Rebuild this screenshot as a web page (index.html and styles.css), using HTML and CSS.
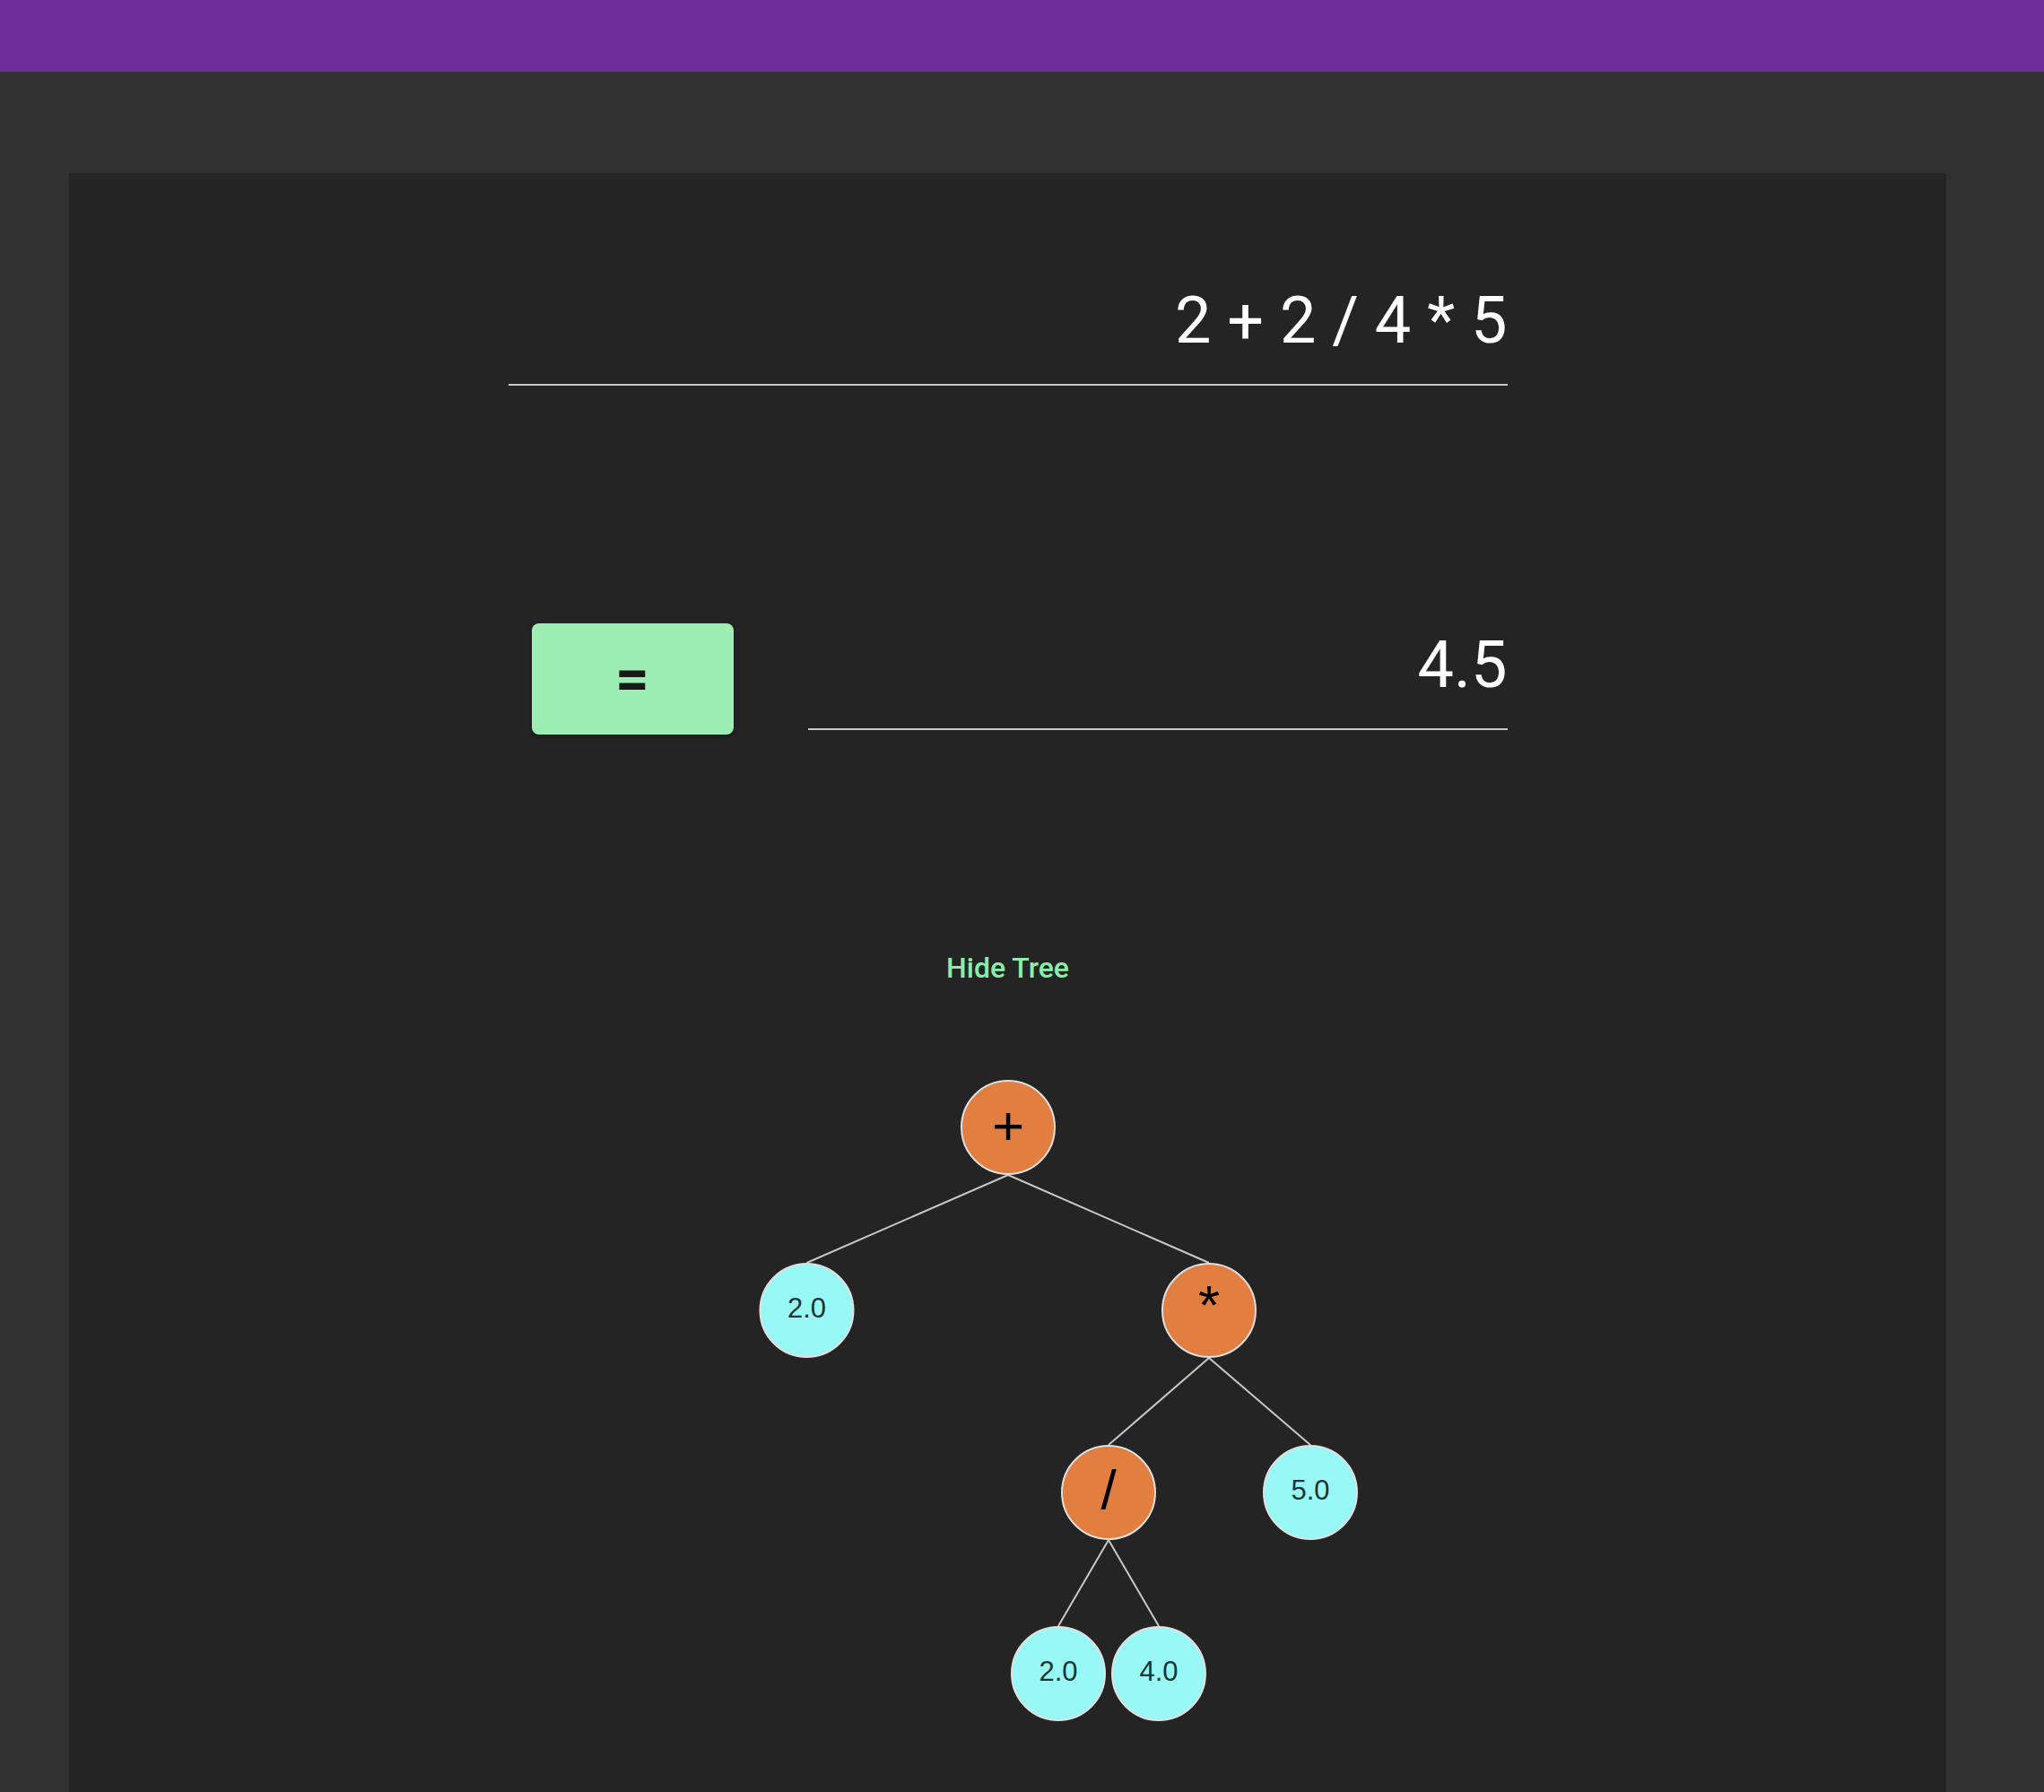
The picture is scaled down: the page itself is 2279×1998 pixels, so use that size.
FILE: index.html
```html
<!DOCTYPE html>
<html lang="en">
<head>
<meta charset="utf-8">
<title>Expression Tree Calculator</title>
<link rel="stylesheet" href="styles.css">
</head>
<body>
<header class="topbar"></header>
<main class="page">
  <section class="panel">
    <div class="field expr">2 + 2 / 4 * 5</div>
    <div class="eval-row">
      <button class="eq-btn">=</button>
      <div class="field result">4.5</div>
    </div>
    <button class="toggle">Hide Tree</button>
    <svg class="tree" width="800" height="730" viewBox="0 0 800 730" xmlns="http://www.w3.org/2000/svg">
      <g class="edges">
        <line x1="400" y1="120" x2="175.5" y2="218"/>
        <line x1="400" y1="120" x2="624" y2="218"/>
        <line x1="624" y1="324" x2="512" y2="421"/>
        <line x1="624" y1="324" x2="737" y2="421"/>
        <line x1="512" y1="527" x2="456" y2="623"/>
        <line x1="512" y1="527" x2="568" y2="623"/>
      </g>
      <g class="node op"><circle cx="400" cy="67" r="52"/><text x="400" y="64">+</text></g>
      <g class="node num"><circle cx="175.5" cy="271" r="52"/><text x="175.5" y="268">2.0</text></g>
      <g class="node op"><circle cx="624" cy="271" r="52"/><text x="624" y="264">*</text></g>
      <g class="node op"><circle cx="512" cy="474" r="52"/><text x="512" y="470">/</text></g>
      <g class="node num"><circle cx="737" cy="474" r="52"/><text x="737" y="471">5.0</text></g>
      <g class="node num"><circle cx="456" cy="676" r="52"/><text x="456" y="673">2.0</text></g>
      <g class="node num"><circle cx="568" cy="676" r="52"/><text x="568" y="673">4.0</text></g>
    </svg>
  </section>
</main>
</body>
</html>
```
FILE: styles.css
```css
* { box-sizing: border-box; }
html, body { margin: 0; padding: 0; }
body {
  background: #313131;
  font-family: Roboto, "Liberation Sans", sans-serif;
  height: 1998px;
  overflow: hidden;
}
.topbar {
  height: 80px;
  background: #6f2c9b;
}
.page {
  padding-top: 113px;
  padding-left: 77px;
}
.panel {
  width: 2093px;
  min-height: 1805px;
  background: #242424;
  padding-top: 123px;
  display: flex;
  flex-direction: column;
  align-items: center;
}
.field {
  color: #ffffff;
  font-family: Roboto, sans-serif;
  font-weight: 400;
  font-size: 72px;
  line-height: 84px;
  text-align: right;
  padding-bottom: 28px;
  border-bottom: 2px solid #c8c8c8;
}
.expr { width: 1114px; }
.eval-row {
  width: 1114px;
  margin-top: 265px;
  display: flex;
  align-items: center;
}
.eq-btn {
  margin-left: 26px;
  margin-right: 83px;
  width: 225px;
  height: 124px;
  flex: none;
  border: none;
  border-radius: 8px;
  background: #9ceeb4;
  color: #131d16;
  font-family: Roboto, sans-serif;
  font-weight: 700;
  font-size: 66px;
  line-height: 1;
  padding: 0;
  box-shadow: 0 2px 5px rgba(0, 0, 0, 0.35);
}
.result { flex: 1; }
.toggle {
  margin-top: 241px;
  background: none;
  border: none;
  padding: 0;
  color: #8aeeaa;
  font-family: Roboto, sans-serif;
  font-weight: 500;
  font-size: 32px;
  line-height: 38px;
}
.tree {
  display: block;
  margin-top: 92px;
  overflow: hidden;
}
.edges line {
  stroke: #c8c8c8;
  stroke-width: 2;
}
.node circle {
  stroke: #e0e0e0;
  stroke-width: 2;
}
.node text {
  font-family: "Liberation Sans", Arial, sans-serif;
  text-anchor: middle;
  dominant-baseline: central;
}
.op circle { fill: #e17e40; }
.op text { fill: #000000; font-size: 62px; }
.num circle { fill: #97f8f5; }
.num text { fill: #1a3535; font-size: 31px; }
```
